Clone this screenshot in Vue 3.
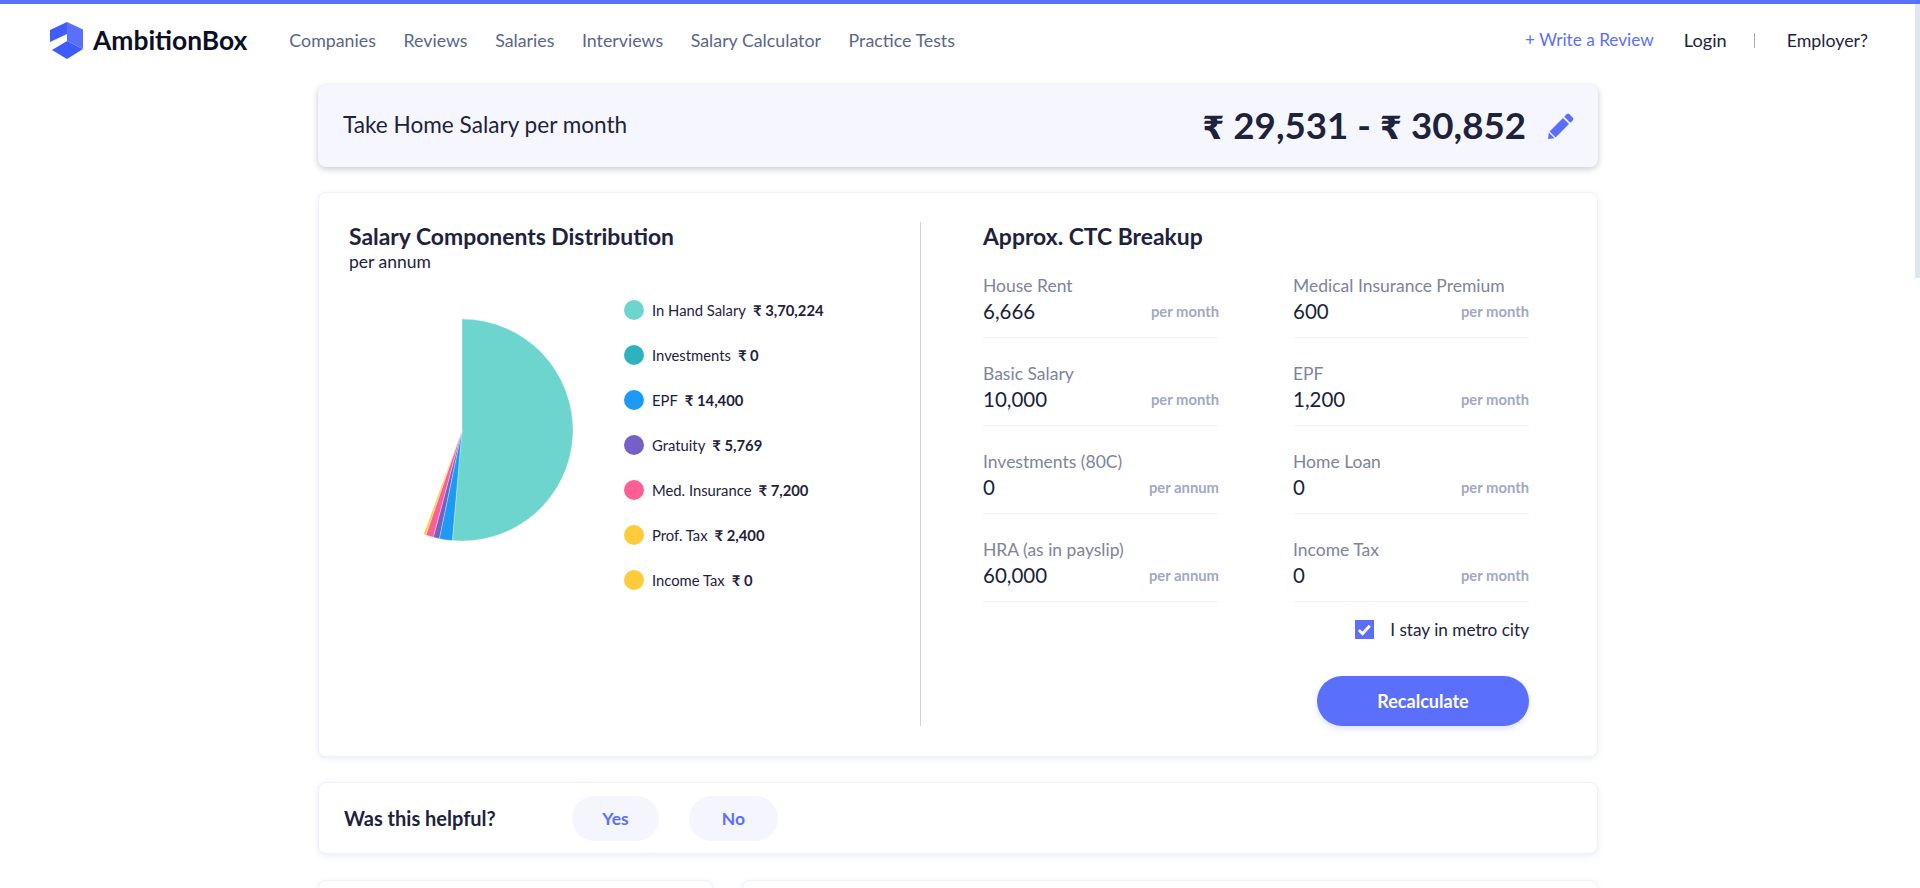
<script setup>
const navLinks = ['Companies', 'Reviews', 'Salaries', 'Interviews', 'Salary Calculator', 'Practice Tests']
const legend = [
  { label: 'In Hand Salary', value: '₹ 3,70,224', color: '#6dd5cd' },
  { label: 'Investments', value: '₹ 0', color: '#2db3bf' },
  { label: 'EPF', value: '₹ 14,400', color: '#1c9af5' },
  { label: 'Gratuity', value: '₹ 5,769', color: '#7460c6' },
  { label: 'Med. Insurance', value: '₹ 7,200', color: '#fc5f93' },
  { label: 'Prof. Tax', value: '₹ 2,400', color: '#fecb3c' },
  { label: 'Income Tax', value: '₹ 0', color: '#fecb3c' }
]
const fields = [
  { label: 'House Rent', value: '6,666', unit: 'per month' },
  { label: 'Medical Insurance Premium', value: '600', unit: 'per month' },
  { label: 'Basic Salary', value: '10,000', unit: 'per month' },
  { label: 'EPF', value: '1,200', unit: 'per month' },
  { label: 'Investments (80C)', value: '0', unit: 'per annum' },
  { label: 'Home Loan', value: '0', unit: 'per month' },
  { label: 'HRA (as in payslip)', value: '60,000', unit: 'per annum' },
  { label: 'Income Tax', value: '0', unit: 'per month' }
]
const R = 111
const point = (deg) => {
  const a = (deg * Math.PI) / 180
  return `${(R * Math.sin(a)).toFixed(2)} ${(-R * Math.cos(a)).toFixed(2)}`
}
const slices = [
  { from: 0, to: 185, color: '#6dd5cd' },
  { from: 185, to: 191.8, color: '#1c9af5' },
  { from: 191.8, to: 195, color: '#7460c6' },
  { from: 195, to: 199, color: '#fc5f93' },
  { from: 199, to: 200.2, color: '#fecb3c' }
].map((s) => ({
  color: s.color,
  d: `M0 0 L${point(s.from)} A${R} ${R} 0 ${s.to - s.from > 180 ? 1 : 0} 1 ${point(s.to)} Z`
}))
</script>

<template>
  <div class="page">
    <header class="topbar">
      <div class="brand">
        <svg class="logo" viewBox="0 0 34 38" width="34" height="38" aria-hidden="true">
          <path d="M17 0 L33 7.5 V27 L17 19 Z" fill="#5a6ffb" />
          <path d="M0 8 L17 0 V12 L0 20 Z" fill="#3f5dff" />
          <path d="M2 28 L17 19 L33 27 L17 37 Z" fill="#3d5bff" />
        </svg>
        <span class="brand-name">AmbitionBox</span>
      </div>
      <nav class="nav">
        <a v-for="link in navLinks" :key="link" class="nav-link">{{ link }}</a>
      </nav>
      <div class="actions">
        <a class="write">+ Write a Review</a>
        <a class="login">Login</a>
        <span class="sep"></span>
        <a class="employer">Employer?</a>
      </div>
    </header>

    <main class="content">
      <section class="take-home">
        <span class="take-title">Take Home Salary per month</span>
        <div class="take-right">
          <span class="take-amount"><span class="rs">₹</span> 29,531 - <span class="rs">₹</span> 30,852</span>
          <svg class="pencil" viewBox="0 0 26 26" width="26" height="26" aria-hidden="true">
            <path d="M18.6 1.3 a2 2 0 0 1 2.8 0 l3.3 3.3 a2 2 0 0 1 0 2.8 l-2.4 2.4 -6.1 -6.1z" fill="#5a6ffb" />
            <path d="M15 5 L21 11 L7.6 24.4 L1.6 18.4 Z" fill="#5a6ffb" />
            <path d="M0.8 19.6 L6.4 25.2 L0 26 Z" fill="#5a6ffb" />
          </svg>
        </div>
      </section>

      <section class="card main-card">
        <div class="left">
          <h2 class="heading">Salary Components Distribution</h2>
          <div class="sub">per annum</div>
          <div class="chart-row">
            <svg class="pie" viewBox="-113 -113 226 226" width="226" height="226" aria-hidden="true">
              <path v-for="s in slices" :key="s.color" :d="s.d" :fill="s.color" stroke="#fff" stroke-width="0.3" />
            </svg>
            <ul class="legend">
              <li v-for="item in legend" :key="item.label" class="legend-item">
                <span class="dot" :style="{ background: item.color }"></span>
                <span class="legend-label">{{ item.label }}</span>
                <b class="legend-value">{{ item.value }}</b>
              </li>
            </ul>
          </div>
        </div>
        <div class="right">
          <h2 class="heading">Approx. CTC Breakup</h2>
          <div class="fields">
            <div v-for="f in fields" :key="f.label" class="field">
              <div class="field-label">{{ f.label }}</div>
              <div class="field-line">
                <span class="field-value">{{ f.value }}</span>
                <span class="field-unit">{{ f.unit }}</span>
              </div>
            </div>
          </div>
          <div class="metro">
            <span class="check">
              <svg viewBox="0 0 20 20" width="20" height="20" aria-hidden="true">
                <path d="M4 10.5 L8 14.5 L15.5 6" fill="none" stroke="#fff" stroke-width="3" />
              </svg>
            </span>
            <span class="metro-text">I stay in metro city</span>
          </div>
          <div class="recalc-row">
            <button class="recalc">Recalculate</button>
          </div>
        </div>
      </section>

      <section class="card helpful">
        <span class="helpful-title">Was this helpful?</span>
        <button class="pill pill-yes">Yes</button>
        <button class="pill pill-no">No</button>
      </section>

      <div class="lower">
        <section class="card lower-a"></section>
        <section class="card lower-b"></section>
      </div>
    </main>
    <div class="thumb"></div>
  </div>
</template>

<style>
html, body { margin: 0; background: #fff; overflow: hidden; }
</style>

<style scoped>
.page {
  position: relative;
  height: 888px;
  overflow: hidden;
  font-family: "Lato", "DejaVu Sans", sans-serif;
  color: #1e223c;
  border-top: 4px solid #5a6ffb;
  box-sizing: border-box;
}
.thumb {
  position: absolute;
  top: -4px;
  right: 0;
  width: 5px;
  height: 278px;
  background: #dfe6ee;
}
.topbar {
  display: flex;
  align-items: center;
  width: 1915px;
  height: 72px;
  box-sizing: border-box;
  padding: 0 47px 0 50px;
}
.brand { display: flex; align-items: center; gap: 9px; }
.logo { display: block; margin-top: 2px; }
.brand-name { font-size: 26.4px; font-weight: 700; color: #0b1024; }
.nav { display: flex; gap: 27.6px; margin-left: 42px; }
.nav-link { font-size: 17.8px; color: #5a6689; }
.actions { display: flex; align-items: center; margin-left: auto; font-size: 17.8px; }
.write { color: #5a6ffb; margin-right: 30px; font-size: 17.2px; position: relative; top: -1px; }
.login { color: #1e223c; font-size: 18.2px; }
.sep { width: 1px; height: 15px; background: #a8adbd; margin: 0 32px 0 27px; }
.employer { color: #1e223c; }
.content {
  width: 1280px;
  margin: 9px 0 0 318px;
  display: flex;
  flex-direction: column;
}
.take-home {
  height: 82px;
  box-sizing: border-box;
  padding: 0 24px 0 25px;
  display: flex;
  align-items: center;
  justify-content: space-between;
  background: #f6f7fe;
  border-radius: 8px;
  box-shadow: 0 2px 6px rgba(30, 34, 60, 0.25);
}
.take-title { font-size: 22.6px; margin-bottom: 3px; }
.take-right { display: flex; align-items: center; gap: 22px; }
.take-amount { font-size: 36.7px; font-weight: 700; margin-bottom: 3px; }
.rs { font-family: "DejaVu Sans", sans-serif; font-size: 32px; }
.pencil { display: block; }
.card {
  background: #fff;
  border: 1px solid #eef2f8;
  border-radius: 8px;
  box-shadow: 0 2px 6px rgba(200, 212, 232, 0.4);
  box-sizing: border-box;
}
.main-card {
  margin-top: 25px;
  height: 565px;
  padding: 29px 0 29px 30px;
  display: flex;
}
.left { width: 571px; border-right: 1px solid #cfd3da; height: 504px; }
.right { padding-left: 62px; width: 546px; }
.heading { margin: 0; font-size: 22.9px; line-height: 26px; font-weight: 700; color: #1e223c; padding-top: 1px; }
.sub { font-size: 17.5px; line-height: 22px; margin-top: 2px; }
.chart-row { display: flex; margin-top: 23px; }
.pie { display: block; margin: 21px 0 0 0; }
.legend { list-style: none; margin: 4px 0 0 49px; padding: 0; display: flex; flex-direction: column; gap: 25px; }
.legend-item { display: flex; align-items: center; height: 20px; font-size: 14.8px; }
.dot { width: 20px; height: 20px; border-radius: 50%; margin-right: 8px; }
.legend-value { margin-left: 7px; font-weight: 700; }
.fields {
  display: grid;
  grid-template-columns: 236px 236px;
  column-gap: 74px;
  row-gap: 22px;
  margin-top: 23px;
}
.field { height: 65px; border-bottom: 1px solid #f1f3f8; box-sizing: content-box; }
.field-label { font-size: 17.5px; line-height: 25px; padding-top: 1px; color: #7e8499; }
.field-line { display: flex; align-items: center; justify-content: space-between; height: 25px; }
.field-value { font-size: 20.5px; color: #1a1f3d; }
.field-unit { font-size: 14.8px; font-weight: 700; color: #a3a8c2; }
.metro { display: flex; align-items: center; justify-content: flex-end; margin-top: 17px; width: 546px; }
.check { width: 19px; height: 19px; background: #5a6ffb; display: block; margin-right: 16px; }
.check svg { display: block; width: 19px; height: 19px; }
.metro-text { font-size: 17.2px; }
.recalc-row { display: flex; justify-content: flex-end; width: 546px; margin-top: 36px; }
.recalc {
  width: 212px;
  height: 50px;
  border: none;
  border-radius: 25px;
  background: #5a6ffb;
  color: #fff;
  font: 700 18px "Lato", sans-serif;
  box-shadow: 0 3px 6px rgba(90, 111, 251, 0.2);
}
.helpful {
  margin-top: 25px;
  height: 72px;
  display: flex;
  align-items: center;
  padding-left: 25px;
}
.helpful-title { font-size: 20px; font-weight: 700; width: 228px; }
.pill {
  height: 45px;
  border: none;
  border-radius: 23px;
  background: #f5f5fe;
  color: #5a6ffb;
  font: 700 17.5px "Lato", sans-serif;
}
.pill-yes { width: 87px; }
.pill-no { width: 89px; margin-left: 30px; }
.lower { display: flex; gap: 29px; margin-top: 26px; }
.lower-a { width: 395px; height: 200px; }
.lower-b { width: 856px; height: 200px; }
</style>
